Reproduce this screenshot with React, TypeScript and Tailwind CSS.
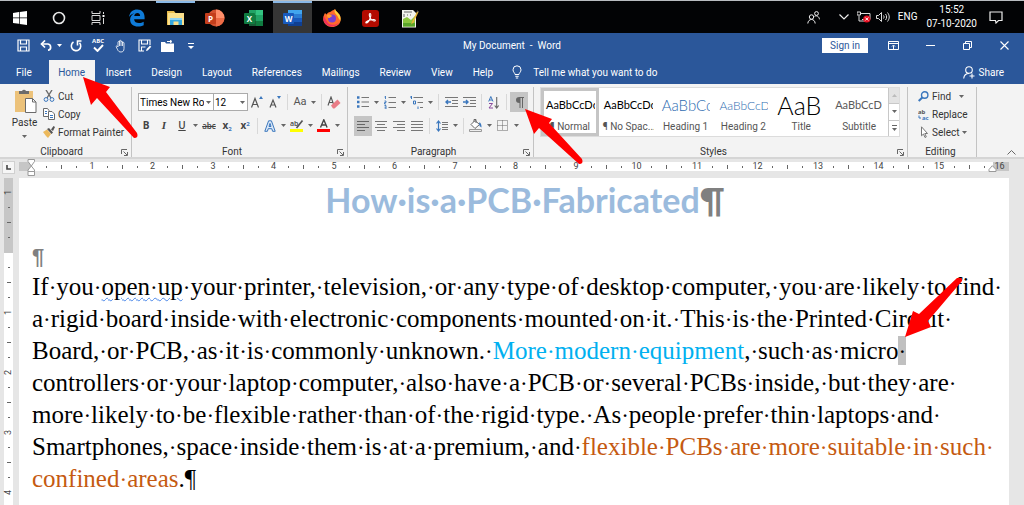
import type { ReactNode } from 'react';
import clsx from 'clsx';

const tabs = ['File', 'Home', 'Insert', 'Design', 'Layout', 'References', 'Mailings', 'Review', 'View', 'Help'];

const styleItems = [
  { name: '¶ Normal', sample: 'AaBbCcDc', look: 'text-[11px] text-black' },
  { name: '¶ No Spac...', sample: 'AaBbCcDc', look: 'text-[11px] text-black' },
  { name: 'Heading 1', sample: 'AaBbCc', look: 'text-[15px] text-[#2e6cb0] font-light' },
  { name: 'Heading 2', sample: 'AaBbCcD', look: 'text-[12px] text-[#2e6cb0] font-light' },
  { name: 'Title', sample: 'AaB', look: 'text-[25px] text-black font-light' },
  { name: 'Subtitle', sample: 'AaBbCcD', look: 'text-[11px] text-[#5a5a5a]' },
];

interface SvgProps {
  w?: number;
  h?: number;
  children: ReactNode;
}

function Svg({ w = 16, h = 16, children }: SvgProps) {
  return (
    <svg width={w} height={h} viewBox={`0 0 ${w} ${h}`} fill="none" className="shrink-0" aria-hidden="true">
      {children}
    </svg>
  );
}

function Caret({ color = '#666' }: { color?: string }) {
  return (
    <Svg w={5} h={3}>
      <path d="M0 0h5L2.5 3z" fill={color} />
    </Svg>
  );
}

interface ToolProps {
  label: string;
  active?: boolean;
  caret?: boolean;
  children: ReactNode;
}

function Tool({ label, active, caret, children }: ToolProps) {
  return (
    <button aria-label={label} title={label} className="flex h-5 items-center">
      <span className={clsx('flex h-5 w-[18px] items-center justify-center', active && 'bg-[#c5c5c5]')}>{children}</span>
      {caret && (
        <span className="flex w-[9px] justify-center">
          <Caret />
        </span>
      )}
    </button>
  );
}

function Sep() {
  return <span className="mx-[3px] h-4 w-px shrink-0 bg-[#d8d8d8]" />;
}

function Launcher() {
  return (
    <Svg w={7} h={7}>
      <path d="M.5 5V.5H6M2.500 2.500l3.500 3.500M6.500 3v3.500H3" stroke="#666" />
    </Svg>
  );
}

interface GroupProps {
  name: string;
  className?: string;
  launcher?: boolean;
  children: ReactNode;
}

function Group({ name, className, launcher = true, children }: GroupProps) {
  return (
    <section aria-label={name} className={clsx('flex flex-col border-r border-[#c3c3c3]', className)}>
      <div className="flex h-[57px] shrink-0 flex-col">{children}</div>
      <div className="flex items-center pr-[3px]">
        <span className="flex-1 pr-[10px] text-center leading-4">{name}</span>
        {launcher && (
          <button aria-label={`${name} settings`}>
            <Launcher />
          </button>
        )}
      </div>
    </section>
  );
}

function TaskIcon({ label, open, active, children }: { label: string; open?: boolean; active?: boolean; children: ReactNode }) {
  return (
    <button
      aria-label={label}
      className={clsx(
        'flex h-8 w-[39px] items-center justify-center border-t-2',
        active && 'bg-[#353535]',
        open || active ? 'border-[#8ab8e6]' : 'border-transparent',
      )}
    >
      {children}
    </button>
  );
}

function OfficeTile({ letter, dark, children }: { letter: string; dark: string; children: ReactNode }) {
  return (
    <Svg w={20} h={18}>
      {children}
      <rect x="0" y="4" width="11" height="11" rx="1" fill={dark} />
      <text x="5.500" y="12.500" textAnchor="middle" fontSize="8" fontWeight="700" fill="#fff" fontFamily="Open Sans">
        {letter}
      </text>
    </Svg>
  );
}

function Taskbar() {
  return (
    <header className="flex h-[33px] items-start border-t border-[#b8bcc0] bg-[#020305] text-white">
      <TaskIcon label="Start">
        <Svg w={14} h={14}>
          <path d="M0 2l6-.9v5.500H0zM6.700 1L14 0v6.600H6.700zM0 7.300h6v5.500L0 12zM6.700 7.300H14V14l-7.300-1z" fill="#fff" />
        </Svg>
      </TaskIcon>
      <TaskIcon label="Cortana">
        <Svg w={14} h={14}>
          <circle cx="7" cy="7" r="5.500" stroke="#e8e8e8" strokeWidth="1.600" />
        </Svg>
      </TaskIcon>
      <TaskIcon label="Task view">
        <Svg w={14} h={14}>
          <path d="M1 0v2.500h8V0M1 14v-2.500h8V14M1 4.500h8v5H1zM12.500 1v2M12.500 7v6" stroke="#d8d8d8" />
          <path d="M11.500 4h2v2h-2z" fill="#fff" />
        </Svg>
      </TaskIcon>
      <TaskIcon label="Edge">
        <Svg w={18} h={18}>
          <path
            d="M1 8C1.800 3 5 .6 9.200.6c4.800 0 7.400 3.200 7.400 7.800v1.800H6.100c.2 2.700 2.200 3.800 4.900 3.800 1.700 0 3.300-.5 4.700-1.300v3.500c-1.600.9-3.500 1.300-5.600 1.300-4.800 0-8-2.600-8-7C2.100 7.600 4 5.300 6.500 4.300 4.300 4.600 2.300 6 1 8zm5.200-1h5.900c0-2-1-3.100-2.700-3.100S6.600 5.100 6.200 7z"
            fill="#0f7bd8"
          />
        </Svg>
      </TaskIcon>
      <TaskIcon label="File Explorer" open>
        <Svg w={18} h={16}>
          <path d="M0 1h7l1.500 2H17v12H0z" fill="#e9bd4e" />
          <path d="M1 3h16v12H1z" fill="#fbe08c" />
          <path d="M3 8h12v7h-3.500v-3.500h-5V15H3z" fill="#35a8e0" />
          <path d="M3 8h12v2H3z" fill="#8fd3f3" />
        </Svg>
      </TaskIcon>
      <TaskIcon label="PowerPoint">
        <OfficeTile letter="P" dark="#c43e1c">
          <circle cx="11" cy="9" r="8.500" fill="#d35230" />
          <path d="M11 .5A8.500 8.500 0 0119.500 9H11z" fill="#ff8f6b" />
          <path d="M19.500 9A8.500 8.500 0 0111 17.500V9z" fill="#ed6c47" />
        </OfficeTile>
      </TaskIcon>
      <TaskIcon label="Excel">
        <OfficeTile letter="X" dark="#107c41">
          <path d="M5 1h7v5H5z" fill="#21a366" />
          <path d="M12 1h7v5h-7z" fill="#33c481" />
          <path d="M5 6h7v6H5zM12 12h7v5h-7z" fill="#107c41" />
          <path d="M12 6h7v6h-7z" fill="#21a366" />
          <path d="M5 12h7v5H5z" fill="#185c37" />
        </OfficeTile>
      </TaskIcon>
      <TaskIcon label="Word" active>
        <OfficeTile letter="W" dark="#185abd">
          <path d="M5 1h14v4H5z" fill="#41a5ee" />
          <path d="M5 5h14v4H5z" fill="#2b7cd3" />
          <path d="M5 9h14v4H5z" fill="#185abd" />
          <path d="M5 13h14v4H5z" fill="#103f91" />
        </OfficeTile>
      </TaskIcon>
      <TaskIcon label="Firefox">
        <Svg w={18} h={18}>
          <path d="M2 4l1.500 1.500C5 3 7 3.200 8 2.500 9 1.500 11 1 12 0c.5 2 2 2.500 3 4 2.500 2 3 5 2.500 8-.8 3.500-4 6-8.500 6S.5 14.500.3 10.500C.2 8 .8 6 2 4z" fill="#ff6a2b" />
          <path d="M12 0c.5 2 2 2.500 3 4 2.500 2 3 5 2.300 8-.8-2-2-2.500-2.800-5C13 4.500 10.500 4 12 0z" fill="#ffd23c" />
          <path d="M.3 10.500C1 15 5 17.500 9 17.500c3 0 6-1.500 7-4-3 3-10 3.500-12-1L.8 7z" fill="#f0315b" />
          <circle cx="9" cy="9.500" r="4" fill="#7a3fd0" />
          <path d="M4 6c2-1 4 0 5.500 1-1.500.5-2 1.500-3 2C5 9.500 4 8 4 6z" fill="#ffa02e" />
        </Svg>
      </TaskIcon>
      <TaskIcon label="Acrobat">
        <Svg w={17} h={17}>
          <rect width="17" height="17" rx="3" fill="#b30b00" />
          <path d="M8 3.500c1.200 0 1 2.500.2 4.500C7.300 10.500 5.500 13 4.300 13c-1.400 0 .5-2.300 3.700-3 3-.8 5.500-.6 5.300.5-.2 1.200-3.300.2-4.800-2S7 3.500 8 3.500z" stroke="#fff" strokeWidth="1.100" />
        </Svg>
      </TaskIcon>
      <TaskIcon label="Notepad++">
        <Svg w={18} h={19}>
          <path d="M1 1h11l3 3v14.500H1z" fill="#f2f4ee" />
          <path d="M2 10l4-2 4 3 4-4v10.500H2z" fill="#8cc63f" />
          <path d="M2 14h12v3.500H2z" fill="#5aa52a" />
          <path d="M3 3h8M3 5v3M6 6h1M9 6h1" stroke="#666" />
          <path d="M16.500 1.500L11 13l-1 2.500 2.500-2L17.500 3z" fill="#e9b63a" />
          <path d="M16 2l1.500 1" stroke="#555" strokeWidth="1.500" />
        </Svg>
      </TaskIcon>

      <div className="ml-auto flex h-8 items-center leading-[14px]">
        <button aria-label="People" className="mr-[19px]">
          <Svg w={13} h={13}>
            <circle cx="4.500" cy="6" r="2.200" stroke="#eee" />
            <path d="M.8 12.500C1 10 2.500 8.500 4.500 8.500S8 10 8.200 12.500" stroke="#eee" />
            <circle cx="9.500" cy="2.500" r="1.900" stroke="#eee" />
            <path d="M7.500 5.300c2-1.200 4.500 0 5 3" stroke="#eee" />
          </Svg>
        </button>
        <button aria-label="Show hidden icons" className="mr-2">
          <Svg w={10} h={6}>
            <path d="M.5.500L5 5 9.500.500" stroke="#eee" strokeWidth="1.200" />
          </Svg>
        </button>
        <button aria-label="Network" className="mr-[5px]">
          <Svg w={14} h={12}>
            <path d="M4 2.500h9v6H5M2 4.500V10h5M0 1h3.500v3H0zM7 10.500h4" stroke="#ddd" />
            <circle cx="9.800" cy="8" r="3.600" fill="#e81123" />
            <path d="M8.300 6.500l3 3M11.300 6.500l-3 3" stroke="#fff" />
          </Svg>
        </button>
        <button aria-label="Volume" className="mr-2">
          <Svg w={14} h={12}>
            <path d="M.5 4.500h2L5.500 1.500v9l-3-3h-2z" stroke="#ddd" />
            <path d="M7.500 4.500c.8 1 .8 2 0 3M9.500 3c1.500 2 1.500 4 0 6M11.500 1.500c2.300 3 2.300 6 0 9" stroke="#ddd" />
          </Svg>
        </button>
        <span className="mr-[9px]">ENG</span>
        <span className="mr-3 text-center">
          15:52
          <br />
          07-10-2020
        </span>
        <button aria-label="Notifications" className="mr-[21px]">
          <Svg w={14} h={13}>
            <path d="M1 1h12v8.500H9.500L7 12 6.500 9.500H1z" stroke="#eee" strokeWidth="1.200" />
          </Svg>
        </button>
      </div>
    </header>
  );
}

function TitleBar() {
  return (
    <div className="grid h-[25px] grid-cols-[1fr_auto_1fr] items-center text-white">
      <div className="flex items-center pl-[17px]">
        <button aria-label="Save" className="mr-[10px]">
          <Svg w={13} h={13}>
            <path d="M1 1h11v11H1zM3.500 1v4h6V1M3.500 12V8h6v4" stroke="#fff" strokeWidth="1.200" />
          </Svg>
        </button>
        <button aria-label="Undo" className="mr-2 flex items-center gap-1">
          <Svg w={13} h={11}>
            <path d="M1.500 4H8a3.200 3.200 0 010 6.300" stroke="#fff" strokeWidth="1.700" />
            <path d="M5 .5L1.500 4 5 7.500" stroke="#fff" strokeWidth="1.700" />
          </Svg>
          <Caret color="#fff" />
        </button>
        <button aria-label="Redo" className="mr-[10px]">
          <Svg w={12} h={12}>
            <path d="M3.500 2a4.700 4.700 0 106 .8" stroke="#fff" strokeWidth="1.600" />
            <path d="M11.500 1H7.500v4.500" stroke="#fff" strokeWidth="1.600" />
          </Svg>
        </button>
        <button aria-label="Spelling" className="mr-[11px] flex flex-col items-center">
          <span className="font-['Open_Sans'] text-[6px] leading-[5px] font-bold">ABC</span>
          <Svg w={11} h={8}>
            <path d="M1 3.500L4.500 7 10 1" stroke="#fff" strokeWidth="1.900" />
          </Svg>
        </button>
        <button aria-label="Touch mode" className="mr-3">
          <Svg w={11} h={14}>
            <path d="M3 8V3.200c0-1 1.500-1 1.500 0V2c0-1 1.500-1 1.500 0v1c0-1 1.500-1 1.500 0v1c0-.9 1.500-.9 1.500 0v5.500C9 12 7.800 13 6 13s-2.700-.8-3.300-2.200L1 7.500c.5-.8 1.300-.5 2 .5zM4.500 3v4M6 3v4M7.500 4v3" stroke="#fff" strokeWidth=".8" />
          </Svg>
        </button>
        <button aria-label="Save as" className="mr-[9px]">
          <Svg w={14} h={13}>
            <path d="M12 6V1H1v11h5M3.500 1v4h6V1M3.500 12V8h4" stroke="#fff" strokeWidth="1.100" />
            <path d="M8 12l.6-2L12 6.500l1.300 1.300-3.500 3.600z" fill="#fff" />
          </Svg>
        </button>
        <button aria-label="Open" className="mr-[14px]">
          <Svg w={13} h={12}>
            <path d="M0 2h4l1 1.500h8V12H0z" fill="#fff" />
            <path d="M6 1.500h4M9 0l2 1.500L9 3" stroke="#fff" />
          </Svg>
        </button>
        <button aria-label="Customize toolbar">
          <Svg w={6} h={6}>
            <path d="M0 .5h6" stroke="#fff" />
            <path d="M0 3h6L3 6z" fill="#fff" />
          </Svg>
        </button>
      </div>
      <h1 className="whitespace-pre">My Document  -  Word</h1>
      <div className="flex items-center justify-end pr-[15px]">
        <button className="mr-5 h-[15px] w-[46px] bg-white text-[#2b579a]">Sign in</button>
        <button aria-label="Ribbon display options" className="mr-[27px]">
          <Svg w={11} h={9}>
            <path d="M.5.500h10v8H.5zM.5 2.500h10M5.500 8V4.500M4 5.500L5.500 4 7 5.500" stroke="#fff" />
          </Svg>
        </button>
        <button aria-label="Minimize" className="mr-7">
          <Svg w={9} h={9}>
            <path d="M0 4.500h9" stroke="#fff" />
          </Svg>
        </button>
        <button aria-label="Restore" className="mr-7">
          <Svg w={9} h={9}>
            <path d="M.5 2.500h6v6h-6zM2.500 2V.5h6v6H7" stroke="#fff" />
          </Svg>
        </button>
        <button aria-label="Close">
          <Svg w={9} h={9}>
            <path d="M.5.500l8 8M8.500.500l-8 8" stroke="#fff" strokeWidth="1.100" />
          </Svg>
        </button>
      </div>
    </div>
  );
}

function TabRow() {
  return (
    <nav className="flex h-[26px] items-end pl-[6px] text-white">
      {tabs.map((tab) => (
        <button
          key={tab}
          className={clsx('h-6', tab === 'Home' ? 'mr-px ml-[7px] w-[46px] bg-[#f3f3f3] text-[#2b579a]' : 'px-[10px]')}
        >
          {tab}
        </button>
      ))}
      <button className="ml-[9px] flex h-6 items-center gap-[11px]">
        <Svg w={10} h={14}>
          <path d="M3 9.500C3 8 1 7 1 4.800a4 4 0 018 0C9 7 7 8 7 9.500zM3.300 11.300h3.400M3.800 13h2.400" stroke="#fff" />
        </Svg>
        Tell me what you want to do
      </button>
      <button className="mr-5 ml-auto flex h-6 items-center gap-1">
        <Svg w={12} h={13}>
          <circle cx="6" cy="4" r="3.300" stroke="#fff" strokeWidth="1.100" />
          <path d="M.7 12.500C1 9.500 3 7.500 6 7.500M9 7.500v5M6.500 10h5" stroke="#fff" strokeWidth="1.100" />
        </Svg>
        Share
      </button>
    </nav>
  );
}

function ClipboardGroup() {
  return (
    <Group name="Clipboard" className="w-[132px] pl-3">
      <div className="flex">
        <button className="flex w-[25px] flex-col items-center">
          <Svg w={24} h={28}>
            <path d="M2 4h18v21H2z" fill="#ecc27a" />
            <path d="M6 7V4h3a2.200 2.200 0 014 0h3v3z" fill="#6b6b6b" />
            <path d="M12.500 11.500h7l3.500 3.500v10.500H12.500z" fill="#fff" stroke="#6b6b6b" />
            <path d="M19.500 11.500V15H23" stroke="#6b6b6b" />
          </Svg>
          <span className="leading-4">Paste</span>
          <span className="pt-1">
            <Caret />
          </span>
        </button>
        <div className="flex flex-col pl-[6px]">
          <button className="flex h-[18px] items-center gap-[3px]">
            <Svg w={12} h={12}>
              <path d="M3 0l5 8M9 0L4 8" stroke="#6b6b6b" strokeWidth="1.400" />
              <circle cx="3" cy="9.500" r="1.900" stroke="#3b77bd" />
              <circle cx="9" cy="9.500" r="1.900" stroke="#3b77bd" />
            </Svg>
            Cut
          </button>
          <button className="flex h-[18px] items-center gap-[3px]">
            <Svg w={12} h={12}>
              <path d="M.5.500h4l1.500 2v6H.5z" fill="#fff" stroke="#6b6b6b" />
              <path d="M5.500 3.500H9l2.500 2.500v5.500h-6z" fill="#fff" stroke="#6b6b6b" />
              <path d="M2 3.500h2M2 5.500h2M7 7.500h3M7 9.500h3" stroke="#3b77bd" />
            </Svg>
            Copy
          </button>
          <button className="flex h-[18px] items-center gap-[3px] whitespace-nowrap">
            <Svg w={12} h={12}>
              <path d="M0 6l4-2.500 4 4.500-3 4-2-2z" fill="#ecb95c" />
              <path d="M4 3l2-1 4 4.500L8.500 8zM8 3.500L10.500 0 12 1 10 5z" fill="#555" />
            </Svg>
            Format Painter
          </button>
        </div>
      </div>
    </Group>
  );
}

function Combo({ label, value, className }: { label: string; value: string; className: string }) {
  return (
    <label className={clsx('flex h-[18px] items-center border border-[#ababab] bg-white', className)}>
      <select aria-label={label} className="min-w-0 flex-1 appearance-none overflow-hidden pl-px text-black outline-none">
        <option>{value}</option>
      </select>
      <span className="px-[2px]">
        <Caret />
      </span>
    </label>
  );
}

function FontGroup() {
  return (
    <Group name="Font" className="w-[216px] pl-[5px]">
      <div className="flex h-[26px] items-center pt-1">
        <div className="flex pl-px">
          <Combo label="Font" value="Times New Ro" className="w-[76px]" />
          <Combo label="Font size" value="12" className="-ml-px w-[35px]" />
        </div>
        <Tool label="Increase font size">
          <Svg w={14} h={12}>
            <path d="M1.500 11.500L5 2.500l3.500 9M2.700 8.500h4.600" stroke="#555" strokeWidth="1.200" />
            <path d="M9 3h4l-2-3z" fill="#3b77bd" />
          </Svg>
        </Tool>
        <Tool label="Decrease font size">
          <Svg w={14} h={12}>
            <path d="M2 11.500L5 4l3 7.500M3 9h4" stroke="#555" strokeWidth="1.200" />
            <path d="M9 0h4l-2 3z" fill="#3b77bd" />
          </Svg>
        </Tool>
        <Sep />
        <Tool label="Change case" caret>
          <span className="text-[11px] text-[#555]">Aa</span>
        </Tool>
        <Sep />
        <Tool label="Clear formatting">
          <Svg w={14} h={13}>
            <path d="M1 9.500L4 1l3 8.500M2 6.500h4" stroke="#555" strokeWidth="1.100" />
            <path d="M4 9.500l6.500-6L13.500 7 7.500 12.500H6z" fill="#e97c86" />
          </Svg>
        </Tool>
      </div>
      <div className="flex h-[25px] items-center font-['Open_Sans'] text-[#444]">
        <Tool label="Bold">
          <b>B</b>
        </Tool>
        <Tool label="Italic">
          <i className="font-['Liberation_Serif'] text-[11px] font-bold">I</i>
        </Tool>
        <Tool label="Underline" caret>
          <span className="font-semibold underline">U</span>
        </Tool>
        <Tool label="Strikethrough">
          <s className="text-[8px] font-semibold">abc</s>
        </Tool>
        <Tool label="Subscript">
          <span className="font-bold">
            x<sub className="text-[6px] text-[#3b77bd]">2</sub>
          </span>
        </Tool>
        <Tool label="Superscript">
          <span className="font-bold">
            x<sup className="text-[6px] text-[#3b77bd]">2</sup>
          </span>
        </Tool>
        <Sep />
        <Tool label="Text effects" caret>
          <Svg w={12} h={12}>
            <path d="M.8 11.300L4.600.8h2.800l3.800 10.500H8.600l-.8-2.600H4.200l-.8 2.600zM5 6.500h2L6 3.400z" fill="#dce9f8" stroke="#3b77bd" />
          </Svg>
        </Tool>
        <Tool label="Highlight color" caret>
          <Svg w={14} h={13}>
            <text x="0" y="7" fontSize="7" fontWeight="600" fill="#444" fontFamily="Open Sans">
              ab
            </text>
            <path d="M12.500 1.500L6.500 9" stroke="#555" strokeWidth="1.700" />
            <path d="M0 10h13v3H0z" fill="#ff0" />
          </Svg>
        </Tool>
        <Tool label="Font color" caret>
          <Svg w={14} h={13}>
            <path d="M3.500 8.500L6.800.8l3.300 7.700M4.600 6h4.500" stroke="#444" strokeWidth="1.400" />
            <path d="M0 10h13v3H0z" fill="#f00" />
          </Svg>
        </Tool>
      </div>
    </Group>
  );
}

function ParagraphGroup() {
  const markers = [1.5, 6, 10.5];
  return (
    <Group name="Paragraph" className="w-[186px] pl-[6px]">
      <div className="flex h-[26px] items-center pt-1">
        <Tool label="Bullets" caret>
          <Svg w={13} h={12}>
            {markers.map((y) => (
              <g key={y}>
                <path d={`M0 ${y}h2.500`} stroke="#3b77bd" strokeWidth="2.500" />
                <path d={`M4.500 ${y}H12`} stroke="#777" />
              </g>
            ))}
          </Svg>
        </Tool>
        <Tool label="Numbering" caret>
          <Svg w={13} h={13}>
            <path d="M1.500 0v3M.5 1h1M.5 5h1.500v1.500H.5V8H2M.5 9.500H2V13H.5M.5 11.200H2" stroke="#3b77bd" strokeWidth=".9" />
            <path d="M4.500 1.500H12M4.500 6.500H12M4.500 11.500H12" stroke="#777" />
          </Svg>
        </Tool>
        <Tool label="Multilevel list" caret>
          <Svg w={14} h={13}>
            <path d="M1.500 0v3M0 1h1.500M3.500 5h2v3h-2zM8 10.500v2.500" stroke="#3b77bd" />
            <path d="M3.500 1.500H13M7.500 6.500H13M10 11.500h3" stroke="#777" />
          </Svg>
        </Tool>
        <Sep />
        <Tool label="Decrease indent">
          <Svg w={13} h={11}>
            <path d="M0 .5h13M7 3.500h6M7 6.500h6M0 9.500h13" stroke="#777" />
            <path d="M1 5h5M3 3L1 5l2 2" stroke="#3b77bd" strokeWidth="1.400" />
          </Svg>
        </Tool>
        <Tool label="Increase indent">
          <Svg w={13} h={11}>
            <path d="M0 .5h13M7 3.500h6M7 6.500h6M0 9.500h13" stroke="#777" />
            <path d="M0 5h5M3 3l2 2-2 2" stroke="#3b77bd" strokeWidth="1.400" />
          </Svg>
        </Tool>
        <Sep />
        <Tool label="Sort">
          <Svg w={12} h={13}>
            <path d="M.7 5.500L2.800.5 5 5.500M1.500 4h2.700" stroke="#3b77bd" />
            <path d="M1 7.500h3.500L1 12h4" stroke="#8a4a9e" />
            <path d="M8.700 1v11M6.700 9.500l2 2.500 2-2.500" stroke="#666" strokeWidth="1.100" />
          </Svg>
        </Tool>
        <Sep />
        <Tool label="Show/Hide ¶" active>
          <Svg w={9} h={11}>
            <path d="M4.500 0H9v1H8v10H7V1H5.500v10h-1V6C2 6 1 4.700 1 3s1-3 3.500-3z" fill="#666" />
          </Svg>
        </Tool>
      </div>
      <div className="flex h-[25px] items-center">
        <Tool label="Align left" active>
          <Svg w={12} h={10}>
            <path d="M0 .5h12M0 3.500h8M0 6.500h12M0 9.500h8" stroke="#666" />
          </Svg>
        </Tool>
        <Tool label="Center">
          <Svg w={12} h={10}>
            <path d="M0 .5h12M2 3.500h8M0 6.500h12M2 9.500h8" stroke="#777" />
          </Svg>
        </Tool>
        <Tool label="Align right">
          <Svg w={12} h={10}>
            <path d="M0 .5h12M4 3.500h8M0 6.500h12M4 9.500h8" stroke="#777" />
          </Svg>
        </Tool>
        <Tool label="Justify">
          <Svg w={12} h={10}>
            <path d="M0 .5h12M0 3.500h12M0 6.500h12M0 9.500h12" stroke="#777" />
          </Svg>
        </Tool>
        <Sep />
        <Tool label="Line spacing" caret>
          <Svg w={12} h={12}>
            <path d="M2.500 1v10M.5 3.500l2-2.500 2 2.500M.5 8.500l2 2.500 2-2.500" stroke="#3b77bd" strokeWidth="1.200" />
            <path d="M6 2.500h6M6 4.500h6M6 7.500h6M6 9.500h6" stroke="#777" />
          </Svg>
        </Tool>
        <Sep />
        <Tool label="Shading" caret>
          <Svg w={14} h={13}>
            <path d="M2 5.500L6 1.500l4.500 4L6 9.500z" fill="#fff" stroke="#666" />
            <path d="M5 3V.5h2V4" stroke="#666" />
            <path d="M10 3.500c2 0 2.500 2 2.500 5L10.500 7z" fill="#3b77bd" />
            <path d="M.5 10.500h12v2H.5z" fill="#eee" stroke="#999" />
          </Svg>
        </Tool>
        <Tool label="Borders" caret>
          <Svg w={12} h={12}>
            <path d="M.5.500h10v10H.5zM5.500.500v10M.5 5.500h10" stroke="#666" strokeDasharray="1 1" />
          </Svg>
        </Tool>
      </div>
    </Group>
  );
}

function StylesGroup() {
  return (
    <Group name="Styles" className="min-w-0 flex-1 pl-[6px]">
      <div className="mr-[7px] flex h-[50px] border border-[#dcdcdc] bg-white">
        <div className="flex min-w-0 flex-1">
          {styleItems.map((item, i) => (
            <button
              key={item.name}
              className={clsx(
                'flex min-w-0 flex-1 flex-col overflow-hidden border-[3px] px-px',
                i === 0 ? 'border-[#c5c5c5]' : 'border-transparent',
              )}
            >
              <span className={clsx("flex h-[29px] w-full items-center justify-start overflow-hidden pl-px font-['Lato'] whitespace-nowrap", item.look)}>
                {item.sample}
              </span>
              <span className="w-full text-center leading-[13px] whitespace-nowrap text-[#555]">{item.name}</span>
            </button>
          ))}
        </div>
        <div className="flex w-[11px] flex-col divide-y divide-[#c8c8c8] border-l border-[#c8c8c8]">
          <button aria-label="Scroll up" className="flex flex-1 items-center justify-center bg-[#e3e3e3]">
            <Svg w={5} h={3}>
              <path d="M0 3h5L2.500 0z" fill="#bbb" />
            </Svg>
          </button>
          <button aria-label="Scroll down" className="flex flex-1 items-center justify-center">
            <Caret />
          </button>
          <button aria-label="More styles" className="flex flex-1 items-center justify-center">
            <Svg w={5} h={6}>
              <path d="M0 .5h5" stroke="#666" />
              <path d="M0 3h5L2.500 6z" fill="#666" />
            </Svg>
          </button>
        </div>
      </div>
    </Group>
  );
}

function EditingGroup() {
  return (
    <Group name="Editing" className="w-[69px] pl-[10px]" launcher={false}>
      <button className="flex h-[18px] items-center gap-[3px]">
        <Svg w={11} h={11}>
          <circle cx="6.700" cy="4" r="3.200" stroke="#3b77bd" strokeWidth="1.400" />
          <path d="M4.300 6.500L.7 10" stroke="#3b77bd" strokeWidth="2" />
        </Svg>
        <span className="mr-[5px]">Find</span>
        <Caret />
      </button>
      <button className="flex h-[18px] items-center gap-[3px]">
        <Svg w={11} h={13}>
          <text x="0" y="6" fontSize="6" fontWeight="700" fill="#555" fontFamily="Open Sans">
            ab
          </text>
          <text x="4" y="12" fontSize="6" fontWeight="700" fill="#3b77bd" fontFamily="Open Sans">
            ac
          </text>
          <path d="M1 7.500V10h2" stroke="#3b77bd" />
        </Svg>
        Replace
      </button>
      <button className="flex h-[18px] items-center gap-[3px]">
        <Svg w={11} h={12}>
          <path d="M3.500.800v9l2-1.800 1.500 3.500 1.300-.6L6.800 7.500h2.700z" fill="#fff" stroke="#777" />
        </Svg>
        <span>Select</span>
        <Caret />
      </button>
    </Group>
  );
}

function Ruler() {
  return (
    <div className="flex h-[19px] items-start bg-[#e6e6e6] pr-[15px]">
      <button aria-label="Tab stop" className="mt-[2px] mr-1 ml-[2px] flex h-[13px] w-[13px] items-center justify-center border border-[#d0d0d0] bg-[#f6f6f6]">
        <Svg w={5} h={5}>
          <path d="M1 0v4h4" stroke="#444" strokeWidth="1.600" />
        </Svg>
      </button>
      <div className="relative mt-[3px] flex h-[9px] flex-1">
        <div className="w-3 bg-[#c6c6c6]" />
        <div className="flex-1 bg-white" />
        <div className="w-4 bg-[#c6c6c6]" />
        <div className="absolute inset-y-0 right-[2px] left-5 flex items-center text-[9px] leading-[9px] text-[#444]">
          {Array.from({ length: 64 }, (_, i) => (
            <span key={i} className="flex w-0 flex-1 items-center justify-center">
              {i % 4 === 3 ? (i + 1) / 4 : <i className={clsx('w-px bg-[#666]', i % 4 === 1 ? 'h-1' : 'h-[2px]')} />}
            </span>
          ))}
        </div>
        <div className="absolute -top-[3px] left-2">
          <Svg w={9} h={18}>
            <path d="M1 .5h6.500v2L4.300 7 1 2.500zM4.300 7L7.500 11v1.500H1V11zM1 12.500h6.500v4H1z" fill="#fff" stroke="#999" />
          </Svg>
        </div>
        <div className="absolute top-[3px] right-3">
          <Svg w={9} h={8}>
            <path d="M4.300.700L8 4.500v2H1v-2z" fill="#fff" stroke="#999" />
          </Svg>
        </div>
      </div>
    </div>
  );
}

function SideRuler() {
  return (
    <div className="w-[19px] shrink-0 overflow-hidden bg-[#e6e6e6] pl-1">
      <div className="relative h-full w-[9px] bg-white">
        <div className="h-[75px] bg-[#c6c6c6]" />
        <div className="absolute inset-x-0 top-[7px] flex flex-col text-[9px] text-[#444]">
          {Array.from({ length: 21 }, (_, i) => (
            <span key={i} className="flex h-[15px] items-center justify-center">
              {i % 4 === 0 && i !== 4 && <span className="rotate-180 leading-[9px] [writing-mode:vertical-rl]">{i === 0 ? 1 : i / 4 - 1}</span>}
              {i % 4 !== 0 && <i className={clsx('h-px bg-[#666]', i % 4 === 2 ? 'w-1' : 'w-[2px]')} />}
            </span>
          ))}
        </div>
      </div>
    </div>
  );
}

// Spaces are shown as middle dots while formatting marks are switched on.
function Marks({ text }: { text: string }) {
  return text.split(/( )/).map((part, i) =>
    part === ' ' ? (
      <span key={i} className="text-[23px] leading-none">
        ·
      </span>
    ) : (
      part
    ),
  );
}

function Line({ children }: { children: ReactNode }) {
  return <span className="block whitespace-nowrap">{children}</span>;
}

function DocumentPage() {
  return (
    <article className="min-w-0 flex-1 overflow-hidden bg-white pl-[13px]">
      <h2 className="h-[65px] pl-[9px] text-center font-['Lato'] text-[34px] leading-[44px] font-bold text-[#9bbbdd]">
        How·is·a·PCB·Fabricated
        <span className="text-[#808080]">¶</span>
      </h2>
      <p className="font-['Liberation_Sans'] text-[22px] leading-7 font-bold text-[#808080]">¶</p>
      <p className="font-['Liberation_Serif'] text-[25px] leading-8 text-black">
        <Line>
          <Marks text="If you " />
          <span className="underline decoration-[#4a86e8] decoration-wavy decoration-1 underline-offset-2">
            <Marks text="open up" />
          </span>
          <Marks text=" your printer, television, or any type of desktop computer, you are likely to find " />
        </Line>
        <Line>
          <Marks text="a rigid board inside with electronic components mounted on it. This is the Printed Circuit " />
        </Line>
        <Line>
          <Marks text="Board, or PCB, as it is commonly unknown. " />
          <span className="text-[#00b0f0]">
            <Marks text="More modern equipment" />
          </span>
          <Marks text=", such as micro" />
          <span className="bg-[#c0c0c0] py-px">
            <Marks text=" " />
          </span>
        </Line>
        <Line>
          <Marks text="controllers or your laptop computer, also have a PCB or several PCBs inside, but they are " />
        </Line>
        <Line>
          <Marks text="more likely to be flexible rather than of the rigid type. As people prefer thin laptops and " />
        </Line>
        <Line>
          <Marks text="Smartphones, space inside them is at a premium, and " />
          <span className="text-[#c55a11]">
            <Marks text="flexible PCBs are more suitable in such " />
          </span>
        </Line>
        <Line>
          <span className="text-[#c55a11]">
            <Marks text="confined areas" />
          </span>
          .¶
        </Line>
      </p>
    </article>
  );
}

function PointerArrow({ d, className }: { d: string; className: string }) {
  return (
    <svg width="60" height="64" viewBox="0 0 60 64" className={clsx('pointer-events-none absolute', className)} aria-hidden="true">
      <path d={d} fill="#f00" />
    </svg>
  );
}

export default function App() {
  return (
    <div className="relative flex h-screen flex-col overflow-hidden bg-[#e6e6e6] font-['Roboto',sans-serif] text-[10px] text-[#333]">
      <Taskbar />
      <div className="bg-[#2b579a]">
        <TitleBar />
        <TabRow />
      </div>
      <div className="flex h-[75px] border-b-2 border-[#d5d5d5] bg-[#f3f3f3] pt-[3px]">
        <ClipboardGroup />
        <FontGroup />
        <ParagraphGroup />
        <StylesGroup />
        <EditingGroup />
        <button aria-label="Collapse the ribbon" className="flex w-[47px] items-end justify-end pr-2 pb-[2px]">
          <Svg w={9} h={5}>
            <path d="M.5 4.500l4-4 4 4" stroke="#666" />
          </Svg>
        </button>
      </div>
      <Ruler />
      <main className="flex min-h-0 flex-1 pr-[15px]">
        <SideRuler />
        <DocumentPage />
      </main>

      <PointerArrow d="M0 0L27 10 23 15 54 56Q56 61 51 61L14 21 8 28z" className="top-[77px] left-[83px]" />
      <PointerArrow d="M0 0L27 10 24 14 57 50Q59 55 54 55L14 19 9 25z" className="top-[109px] left-[525px]" />
      <PointerArrow d="M0 59L8 33 14 36 52 0Q58-1 57 3L23 43 26 49z" className="top-[278px] left-[905px]" />
    </div>
  );
}
